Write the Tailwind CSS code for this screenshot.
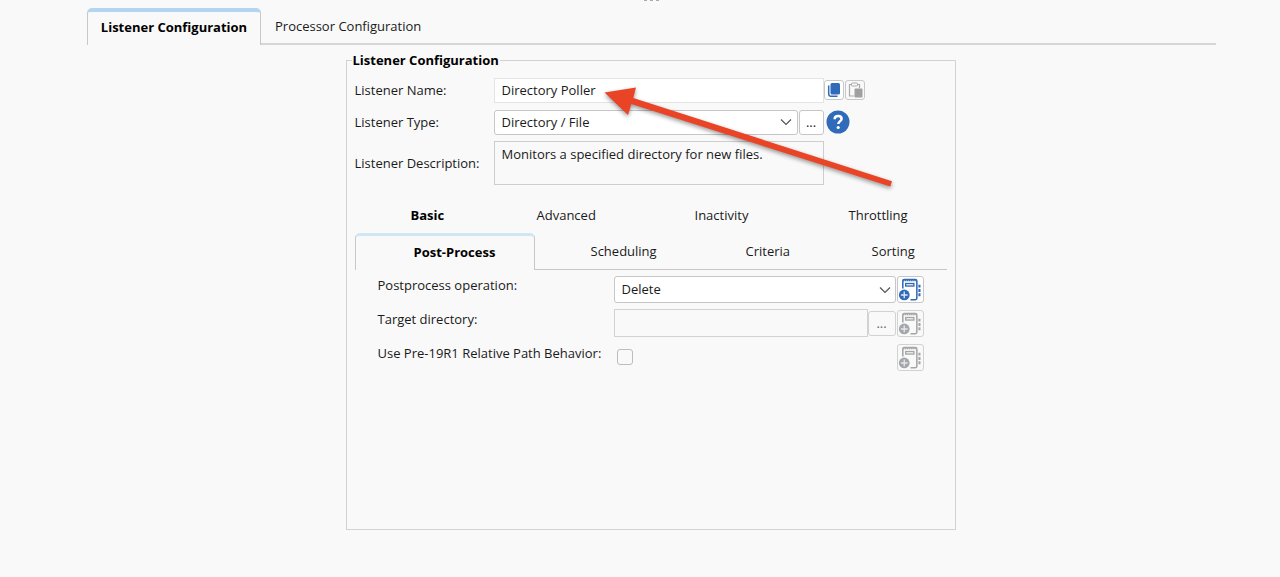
<!DOCTYPE html>
<html lang="en">
<head>
  <meta charset="UTF-8" />
  <meta name="viewport" content="width=device-width, initial-scale=1.0"/>
  <title>Listener Configuration</title>
  <script src="https://cdn.jsdelivr.net/npm/@tailwindcss/browser@4"></script>
</head>
<body class="min-h-screen bg-[#f9f9f9] pl-[87px] pr-16 font-['Open_Sans','Noto_Sans',sans-serif] text-[13px] leading-5 text-[#1a1a1a]">

  <!-- Shared icons -->
  <svg class="hidden">
    <symbol id="icon-book" viewBox="0 0 26 26">
      <path d="M5 12V4.200q0-1.600 1.600-1.600h11.400q1.600 0 1.600 1.600v18q0 1.400-1.600 1.400h-5" fill="none" stroke="currentColor" stroke-width="1.600"/>
      <path d="M5 3.600h14" stroke="currentColor" stroke-width="1.800" stroke-dasharray="1.500 .5"/>
      <rect x="8" y="6.800" width="8.500" height="2.600" fill="none" stroke="currentColor" stroke-width="1.400"/>
      <path d="M22.300 8v3M22.300 12.500v3M22.300 17v3" stroke="currentColor" stroke-width="2.200"/>
      <circle cx="6.500" cy="18.700" r="5.600" fill="currentColor"/>
      <path d="M6.500 15.200v7M3 18.700h7" stroke="#dfe8f3" stroke-width="1.400"/>
    </symbol>
    <symbol id="icon-chevron" viewBox="0 0 12 8">
      <path d="M1 1.500l5 5 5-5" fill="none" stroke="currentColor" stroke-width="1.200"/>
    </symbol>
  </svg>

  <!-- Splitter handle -->
  <div class="flex h-2 justify-center gap-[3px]">
    <span class="h-px w-[3px] bg-[#aaa]"></span>
    <span class="h-px w-[3px] bg-[#aaa]"></span>
    <span class="h-px w-[3px] bg-[#aaa]"></span>
  </div>

  <!-- Main tabs -->
  <nav class="flex h-[37px]">
    <button class="w-[174px] rounded-t-[5px] border-x border-t-4 border-x-[#c8c8c8] border-t-[#b3d5ef] pb-1 text-center font-bold text-black">Listener Configuration</button>
    <button class="flex-1 border-b-2 border-[#d6d6d6] pl-[14px] text-left">Processor Configuration</button>
  </nav>

  <main class="pt-[6px] pr-0.5">
    <fieldset class="relative mx-auto min-h-[479px] w-full max-w-[610px] border border-[#d2d2d2] px-2 pb-4">
      <legend class="-ml-[3px] h-[18px] px-px leading-[18px] font-bold text-black">Listener Configuration</legend>

      <!-- Listener details -->
      <div class="grid grid-cols-[139px_1fr] items-center gap-y-[6px] pt-2">
        <label for="name">Listener Name:</label>
        <div class="flex h-[26px] items-center">
          <input id="name" type="text" value="Directory Poller" class="h-[25px] w-[330px] border border-[#e4e4e4] bg-white px-[7px]"/>
          <button aria-label="Copy" class="flex h-5 w-5 items-center justify-center rounded-[3px] border border-[#c8c8c8] bg-white">
            <svg class="h-4 w-4" viewBox="0 0 16 16">
              <rect x="4.500" y="1" width="9.500" height="11.500" rx="1.500" fill="#2f6bb8"/>
              <path d="M2.700 3.500v8.500q0 2.300 2.300 2.300h6.500" fill="none" stroke="#2f6bb8" stroke-width="1.500"/>
            </svg>
          </button>
          <button aria-label="Paste" class="ml-px flex h-5 w-5 items-center justify-center rounded-[3px] border border-[#c8c8c8]">
            <svg class="h-4 w-4" viewBox="0 0 16 16">
              <path d="M7 14H2.500V2.500h10V6" fill="none" stroke="#aaa" stroke-width="1.200"/>
              <rect x="4.500" y="1" width="6" height="3" rx="1" fill="#f9f9f9" stroke="#aaa"/>
              <rect x="7.500" y="6.500" width="8" height="9" rx="1" fill="#a0a0a0"/>
            </svg>
          </button>
        </div>

        <label for="type">Listener Type:</label>
        <div class="flex h-[26px] items-center">
          <div class="relative">
            <select id="type" class="block h-[25px] w-[304px] appearance-none rounded-[3px] border border-[#c6c6c6] bg-white px-[7px]">
              <option>Directory / File</option>
            </select>
            <svg class="pointer-events-none absolute top-2 right-[6px] h-2 w-3 text-[#555]"><use href="#icon-chevron"/></svg>
          </div>
          <button class="ml-px h-[25px] w-[25px] rounded-[3px] border border-[#c6c6c6] bg-white">...</button>
          <button aria-label="Help" class="ml-[2px]">
            <svg class="h-6 w-6" viewBox="0 0 24 24">
              <circle cx="12" cy="12" r="11.500" fill="#2f6bb8"/>
              <path d="M8.600 9.300c.1-2.200 1.500-3.300 3.500-3.300s3.500 1.100 3.500 2.900c0 2.200-3.300 2.400-3.300 5.200" fill="none" stroke="#fff" stroke-width="2.500"/>
              <circle cx="12.200" cy="17.500" r="1.600" fill="#fff"/>
            </svg>
          </button>
        </div>

        <label for="description">Listener Description:</label>
        <textarea id="description" readonly class="h-11 w-[330px] resize-none border border-[#cecece] px-[7px] py-[2px]">Monitors a specified directory for new files.</textarea>
      </div>

      <!-- Section tabs -->
      <nav class="mt-5 grid grid-cols-[126px_158px_154px_1fr] pl-14 text-left">
        <button class="text-left font-bold text-black">Basic</button>
        <button class="text-left">Advanced</button>
        <button class="text-left">Inactivity</button>
        <button class="text-left">Throttling</button>
      </nav>
      <nav class="mt-2 grid h-[37px] grid-cols-[180px_155px_126px_131px]">
        <button class="rounded-t-[5px] border-x border-t-[3px] border-x-[#c8c8c8] border-t-[#d0e6f5] pb-[2px] pl-[58px] text-left font-bold text-black">Post-Process</button>
        <button class="border-b border-[#c8c8c8] pl-14 text-left">Scheduling</button>
        <button class="border-b border-[#c8c8c8] pl-14 text-left">Criteria</button>
        <button class="border-b border-[#c8c8c8] pl-14 text-left">Sorting</button>
      </nav>

      <!-- Post-process options -->
      <div class="grid grid-cols-[236px_310px] gap-y-[6px] pt-[5px] pl-[23px]">
        <label for="operation">Postprocess operation:</label>
        <div class="flex h-7 items-center">
          <div class="relative">
            <select id="operation" class="block h-[27px] w-[282px] appearance-none rounded-[3px] border border-[#c6c6c6] bg-white px-[7px]">
              <option>Delete</option>
            </select>
            <svg class="pointer-events-none absolute top-[10px] right-[5px] h-2 w-3 text-[#555]"><use href="#icon-chevron"/></svg>
          </div>
          <button aria-label="Add variable" class="ml-px h-[27px] w-[27px] rounded-[3px] border border-[#c6c6c6] bg-white text-[#2f6bb8]">
            <svg class="h-[25px] w-[25px]"><use href="#icon-book"/></svg>
          </button>
        </div>

        <label for="directory">Target directory:</label>
        <div class="flex h-7 items-center">
          <input id="directory" type="text" disabled class="h-7 w-[254px] border border-[#d2d2d2] px-[7px]"/>
          <button disabled class="h-[25px] w-7 rounded-[3px] border border-[#d2d2d2] text-[#666]">...</button>
          <button disabled aria-label="Add variable" class="ml-px h-[27px] w-[27px] rounded-[3px] border border-[#d2d2d2] text-[#a6a6a6]">
            <svg class="h-[25px] w-[25px]"><use href="#icon-book"/></svg>
          </button>
        </div>

        <label for="relative-path">Use Pre-19R1 Relative Path Behavior:</label>
        <div class="flex h-7 items-center justify-between pl-[3px]">
          <input id="relative-path" type="checkbox" class="h-4 w-4 appearance-none rounded-[3px] border border-[#bdbdbd]"/>
          <button disabled aria-label="Add variable" class="h-[27px] w-[27px] rounded-[3px] border border-[#d2d2d2] text-[#a6a6a6]">
            <svg class="h-[25px] w-[25px]"><use href="#icon-book"/></svg>
          </button>
        </div>
      </div>

      <!-- Callout arrow -->
      <svg class="pointer-events-none absolute top-4 left-[255px] h-[108px] w-[296px] drop-shadow-[0_2px_2px_rgba(0,0,0,0.4)]" viewBox="602 85 296 108">
        <path d="M604.500 92.500L636 87.500 633.300 98 892 181.200 890.300 186.500 631.300 104 628 115z" fill="#ea4427"/>
      </svg>
    </fieldset>
  </main>

</body>
</html>
